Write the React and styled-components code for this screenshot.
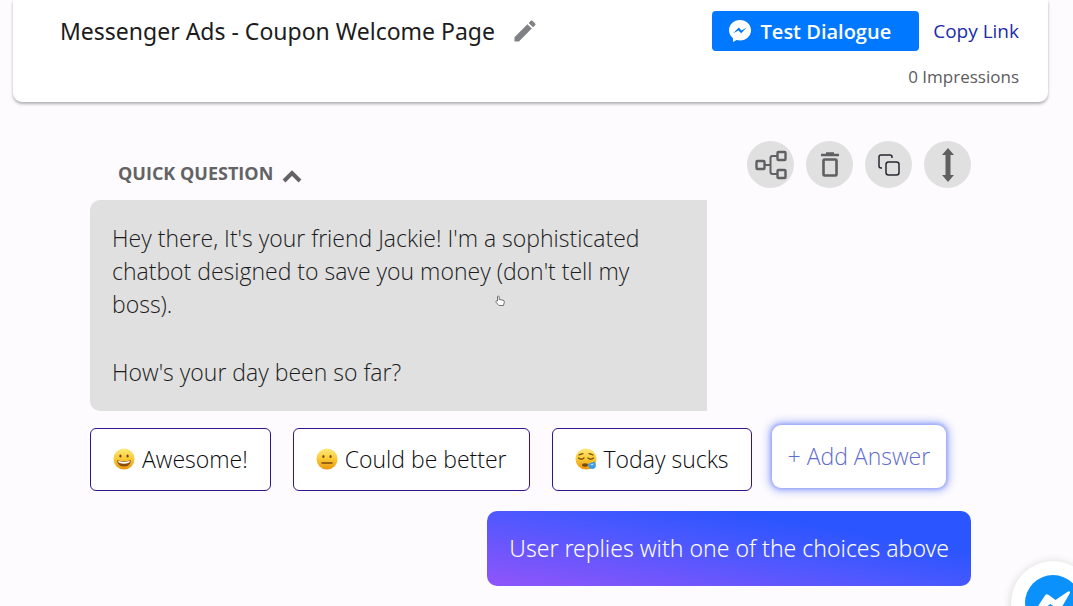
import React, { useState } from "react";
import styled, { createGlobalStyle } from "styled-components";

const ANSWERS = [
  { mood: "happy", text: "Awesome!" },
  { mood: "neutral", text: "Could be better" },
  { mood: "sleepy", text: "Today sucks" },
];

function Emoji({ mood }) {
  return (
    <EmojiIcon viewBox="0 0 22 22" role="img" aria-label={mood}>
      <defs>
        <linearGradient id={`face-${mood}`} x1="0" y1="0" x2="0" y2="1">
          <stop offset="0" stopColor="#fdea7c" />
          <stop offset="0.5" stopColor="#fac934" />
          <stop offset="1" stopColor="#e8960f" />
        </linearGradient>
      </defs>
      <circle cx="11" cy="11" r="10.5" fill={`url(#face-${mood})`} />
      {mood === "happy" && (
        <>
          <ellipse cx="7.4" cy="8" rx="1.1" ry="1.6" fill="#6b3f0c" />
          <ellipse cx="14.6" cy="8" rx="1.1" ry="1.6" fill="#6b3f0c" />
          <path d="M4 12.2Q11 14 18 12.2Q17.2 18.6 11 18.6Q4.8 18.6 4 12.2Z" fill="#8a4c0c" />
          <path d="M5 12.9Q11 14.5 17 12.9Q16.6 15.5 11 15.7Q5.4 15.5 5 12.9Z" fill="#fff" />
        </>
      )}
      {mood === "neutral" && (
        <>
          <ellipse cx="7.4" cy="8.5" rx="1.1" ry="1.6" fill="#7a4a10" />
          <ellipse cx="14.6" cy="8.5" rx="1.1" ry="1.6" fill="#7a4a10" />
          <path d="M6 15H16" stroke="#7a4a10" strokeWidth="1.4" strokeLinecap="round" />
        </>
      )}
      {mood === "sleepy" && (
        <>
          <path
            d="M3.5 10Q6.5 12.5 9 10M13 10Q15.5 12.5 18.5 10M4 7Q6 5.8 8 5.6M14 5.6Q16 5.8 18 7"
            fill="none"
            stroke="#7a4a10"
            strokeWidth="1.2"
            strokeLinecap="round"
          />
          <ellipse cx="10" cy="17" rx="3" ry="1.8" fill="#7a4a10" />
          <path d="M13 16Q16 14.8 19.5 13.5Q22 17 20 20Q17 22 14.5 20Q13 18 13 16Z" fill="#3d9ce8" />
          <path d="M15 16.5Q17 15.8 18.5 15.4Q19 17 17 17.5Z" fill="#b5e2ff" />
        </>
      )}
    </EmojiIcon>
  );
}

function App() {
  const [isOpen, setIsOpen] = useState(true);

  return (
    <>
      <GlobalStyle />
      <Header>
        <TitleRow>
          <Title>Messenger Ads - Coupon Welcome Page</Title>
          <PlainButton aria-label="Edit title">
            <svg width="28" height="28" viewBox="0 0 24 24" fill="#808184">
              <path d="M3 17.25V21h3.75L17.81 9.94l-3.75-3.75L3 17.25zM20.71 7.04a1 1 0 0 0 0-1.41l-2.34-2.34a1 1 0 0 0-1.41 0l-1.83 1.83 3.75 3.75 1.83-1.83z" />
            </svg>
          </PlainButton>
        </TitleRow>
        <HeaderSide>
          <HeaderActions>
            <TestButton>
              <svg width="24" height="24" viewBox="0 0 24 24">
                <path
                  d="M12 1C5.8 1 1 5.6 1 11.3c0 3.2 1.5 6 4 7.9V23l3.6-2c1.1.3 2.2.5 3.4.5 6.2 0 11-4.5 11-10.2S18.2 1 12 1z"
                  fill="#fff"
                />
                <path d="M5.3 14.3l5.4-5.7 2.8 2.9 5.2-2.9-5.5 5.7-2.7-2.9z" fill="#0078ff" />
              </svg>
              Test Dialogue
            </TestButton>
            <CopyLink href="#copy">Copy Link</CopyLink>
          </HeaderActions>
          <Impressions>0 Impressions</Impressions>
        </HeaderSide>
      </Header>

      <Main>
        <BlockHeader>
          <BlockToggle onClick={() => setIsOpen(!isOpen)} aria-expanded={isOpen}>
            QUICK QUESTION
            <svg width="20" height="20" viewBox="0 0 20 20">
              <path d="M2 17L10 9L18 17" fill="none" stroke="#636366" strokeWidth="4" />
            </svg>
          </BlockToggle>
          <Tools>
            <ToolButton aria-label="Connect">
              <svg width="32" height="30" viewBox="0 0 32 30" fill="none" stroke="#606063" strokeWidth="2.4">
                <rect x="1.5" y="11" width="8" height="8" rx="1" />
                <rect x="22.5" y="2" width="8" height="8" rx="1" />
                <rect x="22.5" y="20" width="8" height="8" rx="1" />
                <path d="M9.5 15H15.5M22.5 6H17.5Q15.5 6 15.5 8V22Q15.5 24 17.5 24H22.5" strokeWidth="2" />
              </svg>
            </ToolButton>
            <ToolButton aria-label="Delete">
              <svg width="20" height="28" viewBox="0 0 20 28">
                <path d="M1 4H19M6 2.5H14" stroke="#606063" strokeWidth="2.5" />
                <rect x="3.5" y="8.5" width="13" height="16" rx="1" fill="none" stroke="#606063" strokeWidth="2.6" />
              </svg>
            </ToolButton>
            <ToolButton aria-label="Duplicate">
              <svg width="24" height="24" viewBox="0 0 24 24" fill="none" stroke="#27272f" strokeWidth="1.5">
                <rect x="9" y="9" width="13" height="13" rx="2.5" />
                <path d="M5 15H4Q2 15 2 13V4Q2 2 4 2H13Q15 2 15 4V5" />
              </svg>
            </ToolButton>
            <ToolButton aria-label="Move">
              <svg width="14" height="36" viewBox="0 0 14 36" fill="#606063">
                <path d="M7 1L13 8H9.5V28H13L7 35L1 28H4.5V8H1Z" />
              </svg>
            </ToolButton>
          </Tools>
        </BlockHeader>

        {isOpen && (
          <>
            <Bubble>
              <p>
                Hey there, It's your friend Jackie! I'm a sophisticated
                <br />
                chatbot designed to save you money (don't tell my
                <br />
                boss).
              </p>
              <p>How's your day been so far?</p>
              <Pointer viewBox="0 0 12 12">
                <path
                  d="M3.5 6V2Q3.5 1 4.3 1Q5 1 5.2 2V4.5L9 5.2Q10.5 5.5 10.3 7L9.5 10.5H5L2 7.2Q1.5 6.2 2.3 6Z"
                  fill="#fff"
                  stroke="#55555a"
                  strokeWidth="0.8"
                />
              </Pointer>
            </Bubble>
            <AnswerRow>
              <AnswerList>
                {ANSWERS.map((answer) => (
                  <Answer key={answer.mood}>
                    <Emoji mood={answer.mood} />
                    {answer.text}
                  </Answer>
                ))}
              </AnswerList>
              <AddAnswer>+ Add Answer</AddAnswer>
            </AnswerRow>
          </>
        )}
        <UserReply>User replies with one of the choices above</UserReply>
      </Main>

      <ChatButton aria-label="Open chat">
        <svg width="56" height="56" viewBox="0 0 56 56">
          <circle cx="28" cy="28" r="28" fill="#0a91fb" />
          <path
            d="M10.5 35L20 20.5Q21.5 18.5 23.7 20L30.5 25L43 16.5Q45.5 15.5 45 18L36 33.5Q34.5 35.5 32.3 34L25.5 29L13 37.5Q10.5 38 10.5 35Z"
            fill="#fff"
          />
        </svg>
      </ChatButton>
    </>
  );
}

const GlobalStyle = createGlobalStyle`
  * {
    box-sizing: border-box;
  }

  body {
    margin: 0;
    background: #fdfbfd;
    color: #1c1c20;
    font-family: "Open Sans", "Noto Sans", sans-serif;
  }

  button {
    font-family: inherit;
    cursor: pointer;
  }

  svg {
    display: block;
    flex-shrink: 0;
  }
`;

const Header = styled.header`
  display: flex;
  justify-content: space-between;
  align-items: flex-start;
  margin: 0 25px 0 13px;
  padding: 11px 29px 13px 47px;
  background: #fff;
  border-radius: 0 0 9px 9px;
  box-shadow: 0 2px 3px rgb(60 60 70 / 40%);
`;

const TitleRow = styled.div`
  display: flex;
  align-items: center;
  gap: 16px;
  height: 40px;
`;

const Title = styled.h1`
  margin: 0;
  font-family: "Noto Sans", sans-serif;
  font-size: 23px;
  font-weight: 400;
  white-space: nowrap;
`;

const PlainButton = styled.button`
  padding: 0;
  border: 0;
  background: none;
`;

const HeaderSide = styled.div`
  display: flex;
  flex-direction: column;
  align-items: flex-end;
  gap: 13px;
`;

const HeaderActions = styled.div`
  display: flex;
  align-items: center;
  gap: 14px;
`;

const TestButton = styled.button`
  display: flex;
  align-items: center;
  gap: 9px;
  height: 40px;
  padding: 0 28px 0 16px;
  border: 0;
  border-radius: 4px;
  background: #0078ff;
  color: #fff;
  font-size: 20px;
  font-weight: 600;
  white-space: nowrap;
`;

const CopyLink = styled.a`
  color: #1c2bab;
  font-size: 19px;
  font-weight: 500;
  text-decoration: none;
  white-space: nowrap;
`;

const Impressions = styled.span`
  color: #5c5c60;
  font-size: 17px;
  font-weight: 500;
  line-height: 25px;
`;

const Main = styled.main`
  display: flex;
  flex-direction: column;
  margin: 39px 102px 0 90px;
`;

const BlockHeader = styled.div`
  display: flex;
  justify-content: space-between;
  align-items: flex-start;
  padding-left: 28px;
`;

const BlockToggle = styled.button`
  display: flex;
  align-items: center;
  gap: 9px;
  padding: 20px 0 0;
  border: 0;
  background: none;
  color: #636366;
  font-size: 18px;
  font-weight: 700;
  line-height: 25px;
`;

const Tools = styled.div`
  display: flex;
  gap: 12px;
`;

const ToolButton = styled.button`
  display: flex;
  justify-content: center;
  align-items: center;
  width: 47px;
  height: 47px;
  padding: 0;
  border: 0;
  border-radius: 50%;
  background: #e0e0e1;
`;

const Bubble = styled.div`
  position: relative;
  width: 70%;
  margin-top: 12px;
  padding: 22px;
  border-radius: 10px 0 0 10px;
  background: #e0e0e1;
  font-size: 23px;
  font-weight: 300;
  line-height: 33px;

  p {
    margin: 0;
    white-space: nowrap;
  }

  p + p {
    margin-top: 35px;
  }
`;

const Pointer = styled.svg`
  position: absolute;
  top: 95px;
  left: 404px;
  width: 12px;
  height: 12px;
`;

const AnswerRow = styled.div`
  display: flex;
  align-items: flex-start;
  gap: 20px;
  margin-top: 14px;
`;

const AnswerList = styled.div`
  display: flex;
  gap: 22px;
  padding-top: 3px;
`;

const Answer = styled.button`
  display: flex;
  align-items: center;
  gap: 7px;
  height: 63px;
  padding: 0 22px 2px;
  border: 1px solid #32148c;
  border-radius: 6px;
  background: #fff;
  color: #0c0c10;
  font-size: 23px;
  font-weight: 300;
  white-space: nowrap;
`;

const EmojiIcon = styled.svg`
  width: 22px;
  height: 22px;
`;

const AddAnswer = styled.button`
  height: 63px;
  padding: 0 16px 2px;
  border: 0;
  border-radius: 9px;
  background: #fff;
  box-shadow: 0 0 4px 1px #8d9cf5, 0 0 10px 3px #b4c0fc;
  color: #5f6cd0;
  font-size: 23px;
  font-weight: 300;
  white-space: nowrap;
`;

const UserReply = styled.div`
  align-self: flex-end;
  margin-top: 20px;
  padding: 21px 22px;
  border-radius: 10px;
  background: linear-gradient(10deg, #8a55fa 5%, #4a58ff 50%, #2a55ff 75%);
  color: #fff;
  font-family: "Noto Sans", sans-serif;
  font-size: 23px;
  font-weight: 300;
  line-height: 33px;
  white-space: nowrap;
`;

const ChatButton = styled.button`
  position: fixed;
  right: -22px;
  bottom: -39px;
  display: flex;
  justify-content: center;
  align-items: center;
  width: 84px;
  height: 84px;
  padding: 0;
  border: 0;
  border-radius: 50%;
  background: #fff;
  box-shadow: 0 1px 10px rgb(0 0 0 / 16%);
`;

export default App;
